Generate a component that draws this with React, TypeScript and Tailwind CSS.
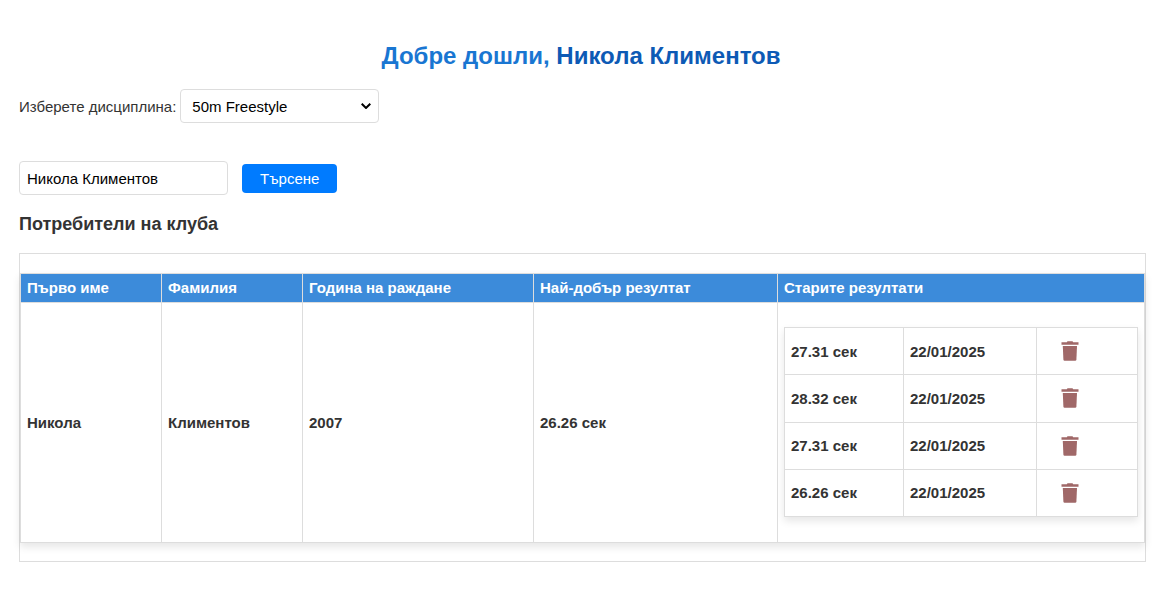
import { useState } from "react";

type Result = { id: number; time: string; date: string };

const columns = [
  { label: "Първо име", width: "w-[141px]" },
  { label: "Фамилия", width: "w-[141px]" },
  { label: "Година на раждане", width: "w-[231px]" },
  { label: "Най-добър резултат", width: "w-[244px]" },
  { label: "Старите резултати", width: "" },
];

const initialResults: Result[] = [
  { id: 1, time: "27.31 сек", date: "22/01/2025" },
  { id: 2, time: "28.32 сек", date: "22/01/2025" },
  { id: 3, time: "27.31 сек", date: "22/01/2025" },
  { id: 4, time: "26.26 сек", date: "22/01/2025" },
];

const cell = "border border-[#ddd] px-[6px] text-left align-middle font-bold";

function TrashIcon() {
  return (
    <svg viewBox="0 0 18 20" className="h-5 w-[18px]" fill="currentColor" aria-hidden="true">
      <path d="M6.5 0.3h5l0.7 1h5.3v2.4h-17v-2.4h5.3z" />
      <path d="M1.8 5h14.2l-0.6 13.6q-0.1 1.2-1.2 1.2h-10.6q-1.1 0-1.2-1.2z" />
    </svg>
  );
}

function ResultsTable() {
  const [results, setResults] = useState(initialResults);
  return (
    <table className="mt-[18px] mb-[19px] h-[190px] w-full table-fixed border-collapse shadow-[0_4px_8px_rgba(0,0,0,0.1)]">
      <tbody>
        {results.map((result) => (
          <tr key={result.id}>
            <td className={`${cell} w-[119px]`}>{result.time}</td>
            <td className={`${cell} w-[133px]`}>{result.date}</td>
            <td className={cell}>
              <button
                type="button"
                aria-label="Изтрий"
                onClick={() => setResults(results.filter((item) => item.id !== result.id))}
                className="block px-[18px] text-[#a06868]"
              >
                <TrashIcon />
              </button>
            </td>
          </tr>
        ))}
      </tbody>
    </table>
  );
}

export default function App() {
  const [query, setQuery] = useState("Никола Климентов");
  return (
    <main className="py-[30px] font-['Liberation_Sans',Arial,sans-serif] text-[15px] leading-[17px] text-[#333]">
      <h1 className="pt-3 text-center text-2xl leading-7 font-bold text-[#1976d2]">
        Добре дошли, <span className="text-[#0d5ab5]">Никола Климентов</span>
      </h1>

      <div className="pr-4 pl-[19px]">
        <div className="mt-[19px] flex items-center gap-1">
          <label htmlFor="discipline">Изберете дисциплина:</label>
          <div className="relative">
            <select
              id="discipline"
              className="block h-[34px] w-[199px] appearance-none rounded-[4px] border border-[#ddd] bg-white px-[11px] text-black"
            >
              <option>50m Freestyle</option>
              <option>100m Freestyle</option>
            </select>
            <svg
              viewBox="0 0 10 6"
              className="pointer-events-none absolute top-[14px] right-2 h-[6px] w-[10px] text-black"
              fill="none"
              stroke="currentColor"
              strokeWidth="2"
              aria-hidden="true"
            >
              <path d="M0.7 0.7 5 5 9.3 0.7" />
            </svg>
          </div>
        </div>

        <form className="mt-[38px] flex items-center gap-[14px]" onSubmit={(event) => event.preventDefault()}>
          <input
            type="text"
            aria-label="Име"
            value={query}
            onChange={(event) => setQuery(event.target.value)}
            className="h-[34px] w-[209px] rounded-[4px] border border-[#ddd] bg-white px-[7px] text-black"
          />
          <button type="submit" className="rounded-[4px] bg-[#007bff] px-[18px] py-[6px] text-white">
            Търсене
          </button>
        </form>

        <h2 className="mt-[18px] text-lg leading-[22px] font-bold">Потребители на клуба</h2>

        <section className="mt-[18px] border border-[#ddd] pt-[19px] pb-[18px]">
          <table className="w-full table-fixed border-collapse shadow-[0_4px_8px_rgba(0,0,0,0.1)]">
            <thead>
              <tr>
                {columns.map((column) => (
                  <th
                    key={column.label}
                    scope="col"
                    className={`${cell} ${column.width} bg-[#3c8bda] pt-[5px] pb-[6px] text-white`}
                  >
                    {column.label}
                  </th>
                ))}
              </tr>
            </thead>
            <tbody>
              <tr>
                <td className={`${cell} py-[6px]`}>Никола</td>
                <td className={`${cell} py-[6px]`}>Климентов</td>
                <td className={`${cell} py-[6px]`}>2007</td>
                <td className={`${cell} py-[6px]`}>26.26 сек</td>
                <td className={`${cell} py-[6px]`}>
                  <ResultsTable />
                </td>
              </tr>
            </tbody>
          </table>
        </section>
      </div>
    </main>
  );
}
